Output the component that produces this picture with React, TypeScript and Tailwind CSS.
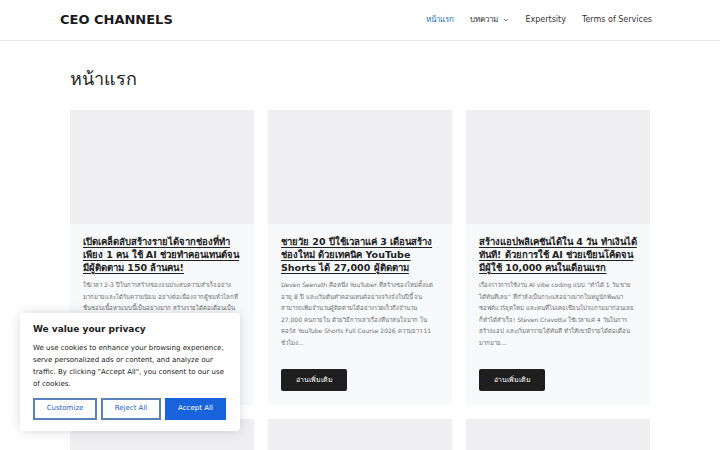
const posts = [
  {
    title: "เปิดเคล็ดลับสร้างรายได้จากช่องที่ทำ เพียง 1 คน ใช้ AI ช่วยทำคอนเทนต์จนมีผู้ติดตาม 150 ล้านคน!",
    excerpt:
      "ใช้เวลา 2-3 ปีในการสร้างช่องจนประสบความสำเร็จอย่างมากมายและได้รับความนิยม อย่างต่อเนื่องจากผู้ชมทั่วโลกที่ชื่นชอบเนื้อหาแบบนี้เป็นอย่างมาก สร้างรายได้ต่อเดือนเป็นจำนวนมาก — อ่านต่อ ทั้งหมดนี้เกิดจากการวางแผนที่ดีและความตั้งใจจริง...",
  },
  {
    title: "ชายวัย 20 ปีใช้เวลาแค่ 3 เดือนสร้างช่องใหม่ ด้วยเทคนิค YouTube Shorts ได้ 27,000 ผู้ติดตาม",
    excerpt:
      "Deven Seenath คือหนึ่ง YouTuber ที่สร้างช่องใหม่ตั้งแต่อายุ 8 ปี และเริ่มต้นทำคอนเทนต์อย่างจริงจังในปีนี้ จนสามารถเพิ่มจำนวนผู้ติดตามได้อย่างรวดเร็วถึงจำนวน 27,000 คนภายใน ด้วยวิธีการเล่าเรื่องที่น่าสนใจมาก ในคอร์ส YouTube Shorts Full Course 2026 ความยาว 11 ชั่วโมง...",
  },
  {
    title: "สร้างแอปพลิเคชันได้ใน 4 วัน ทำเงินได้ทันที! ด้วยการใช้ AI ช่วยเขียนโค้ดจนมีผู้ใช้ 10,000 คนในเดือนแรก",
    excerpt:
      "เรื่องราวการใช้งาน AI vibe coding แบบ \"ทำได้ 1 วัน ขายได้ทันทีเลย\" ที่กำลังเป็นกระแสอย่างมากในหมู่นักพัฒนาซอฟต์แวร์ยุคใหม่ และคนที่ไม่เคยเขียนโปรแกรมมาก่อนเลยก็ทำได้สำเร็จ! Steven Cravotta ใช้เวลาแค่ 4 วันในการสร้างแอป และเริ่มหารายได้ทันที ทำให้เขามีรายได้ต่อเดือนมากมาย...",
  },
];

function Card({ post }: { post: (typeof posts)[number] }) {
  return (
    <article className="flex flex-col bg-[#f8f9fb]">
      <div className="h-[114px] bg-[#efeff1]" />
      <div className="flex flex-1 flex-col px-[13px] pt-[11px] pb-[14px]">
        <h2 className="text-[9.5px] font-bold leading-[13px] text-[#222] underline decoration-[1px] underline-offset-[2px]">
          <a href="#">{post.title}</a>
        </h2>
        <p className="mt-[5px] text-[6px] leading-[11.5px] text-[#6f6f6f]">{post.excerpt}</p>
        <div className="mt-auto pt-[17px]">
          <button className="h-[22px] w-[66px] rounded-[2px] bg-[#1e1e1e] text-[7px] text-white">
            อ่านเพิ่มเติม
          </button>
        </div>
      </div>
    </article>
  );
}

export default function App() {
  return (
    <div className="relative min-h-[450px] bg-white font-['DejaVu_Sans',sans-serif] text-[#222]">
      <header className="border-b border-[#e8e8e8] bg-white">
        <div className="mx-auto flex h-[40px] w-[600px] items-center justify-between">
          <a href="#" className="text-[13px] font-bold text-[#1b1b1b]">
            CEO CHANNELS
          </a>
          <nav className="flex items-center gap-[16px] pr-[8px] text-[8px] text-[#333]">
            <a href="#" className="text-[#1e73be]">หน้าแรก</a>
            <a href="#" className="flex items-center gap-[5px]">
              บทความ
              <svg width="6" height="6" viewBox="0 0 10 10" fill="none" stroke="#555" strokeWidth="1.4">
                <path d="M2 3.5 5 6.5 8 3.5" />
              </svg>
            </a>
            <a href="#">Expertsity</a>
            <a href="#">Terms of Services</a>
          </nav>
        </div>
      </header>

      <main className="mx-auto w-[580px] pt-[27px]">
        <h1 className="text-[18px] leading-[22px] text-[#222]">หน้าแรก</h1>
        <div className="mt-[20px] grid grid-cols-3 gap-[14px]">
          {posts.map((p, i) => (
            <Card key={i} post={p} />
          ))}
          <div className="h-[114px] bg-[#efeff1]" />
          <div className="h-[114px] bg-[#efeff1]" />
          <div className="h-[114px] bg-[#efeff1]" />
        </div>
      </main>

      {/* cookie consent */}
      <div className="absolute left-[20px] top-[313px] w-[220px] rounded-[4px] bg-white px-[13px] pt-[10px] pb-[11px] shadow-[0_0_12px_rgba(0,0,0,0.15)]">
        <p className="text-[9px] font-bold text-[#212121]">We value your privacy</p>
        <p className="mt-[5px] text-[7px] leading-[12px] text-[#212121]">
          We use cookies to enhance your browsing experience, serve personalized ads or content, and analyze our traffic. By clicking "Accept All", you consent to our use of cookies.
        </p>
        <div className="mt-[8px] flex gap-[4px]">
          <button className="h-[22px] w-[64px] border-2 border-[#5b82b8] text-[7px] text-[#1863dc]">
            Customize
          </button>
          <button className="h-[22px] w-[60px] border-2 border-[#5b82b8] text-[7px] text-[#1863dc]">
            Reject All
          </button>
          <button className="h-[22px] w-[61px] border-2 border-[#1863dc] bg-[#1863dc] text-[7px] text-white">
            Accept All
          </button>
        </div>
      </div>
    </div>
  );
}
